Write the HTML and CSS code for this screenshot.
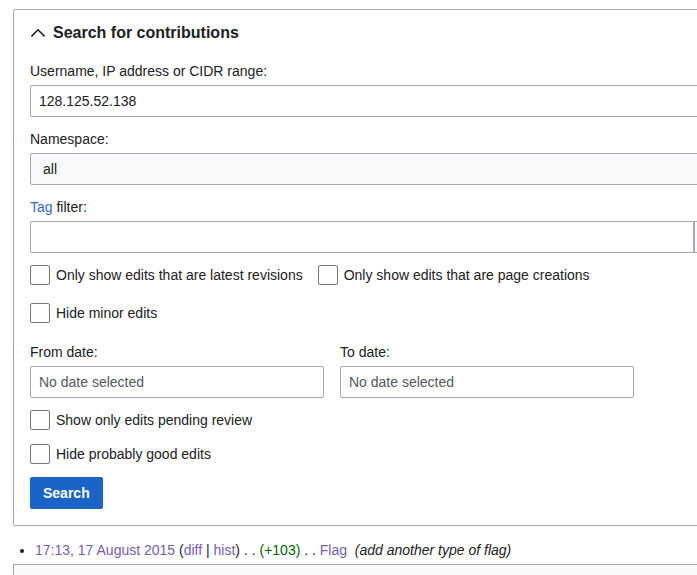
FILE: index.html
```html
<!DOCTYPE html>
<html lang="en">
<head>
<meta charset="utf-8">
<title>Contributions</title>
<link rel="stylesheet" href="styles.css">
</head>
<body>
<div class="page">
  <form class="panel">
    <div class="panel-header">
      <svg class="chevron" width="16" height="16" viewBox="0 0 20 20"><path d="M1.8 14.2 10 6l8.2 8.2" fill="none" stroke="#202122" stroke-width="2"/></svg>
      <span class="panel-title">Search for contributions</span>
    </div>

    <div class="field">
      <label class="label">Username, IP address or CIDR range:</label>
      <div class="input">128.125.52.138</div>
    </div>

    <div class="field">
      <label class="label">Namespace:</label>
      <div class="input select">all</div>
    </div>

    <div class="field">
      <label class="label"><a class="link" href="#">Tag</a> filter:</label>
      <div class="tag-row">
        <div class="input grow"></div>
        <div class="tag-button"></div>
      </div>
    </div>

    <div class="check-row first">
      <span class="check"><span class="box"></span>Only show edits that are latest revisions</span>
      <span class="check"><span class="box"></span>Only show edits that are page creations</span>
    </div>
    <div class="check-row gap18">
      <span class="check"><span class="box"></span>Hide minor edits</span>
    </div>

    <div class="dates">
      <div class="date-field">
        <label class="label">From date:</label>
        <div class="input placeholder">No date selected</div>
      </div>
      <div class="date-field">
        <label class="label">To date:</label>
        <div class="input placeholder">No date selected</div>
      </div>
    </div>

    <div class="check-row first">
      <span class="check"><span class="box"></span>Show only edits pending review</span>
    </div>
    <div class="check-row gap14">
      <span class="check"><span class="box"></span>Hide probably good edits</span>
    </div>

    <button type="button" class="search-btn">Search</button>
  </form>

  <ul class="results">
    <li><a class="visited" href="#">17:13, 17 August 2015</a> (<a class="visited" href="#">diff</a> | <a class="visited" href="#">hist</a>) . . <span class="pos">(+103)</span> . . <a class="visited" href="#">Flag</a> &nbsp;<i>(add another type of flag)</i></li>
  </ul>

  <div class="notice">This is the contributions page for an IP user, identified by the user's IP address. Many IP addresses change periodically.</div>
</div>
</body>
</html>
```

FILE: styles.css
```css
html, body {
  margin: 0;
  padding: 0;
  overflow: hidden;
  background: #ffffff;
}
body {
  font-family: "Liberation Sans", Arial, sans-serif;
  font-size: 14px;
  color: #202122;
  width: 697px;
  height: 575px;
}
.page {
  padding: 9px 0 0 13px;
  width: 760px;
}
.panel {
  border: 1px solid #a2a9b1;
  border-radius: 2px;
  padding: 0 16px 16px 16px;
  width: 700px;
}
.panel-header {
  display: flex;
  align-items: center;
  height: 43px;
  padding-top: 1px;
  gap: 7px;
}
.chevron {
  display: block;
}
.panel-title {
  font-weight: bold;
  font-size: 16px;
}
.field {
  margin-top: 7px;
}
.field + .field {
  margin-top: 12px;
}
.label {
  display: block;
  line-height: 20px;
  margin-bottom: 4px;
}
.link {
  color: #3366cc;
  text-decoration: none;
}
.input {
  box-sizing: border-box;
  height: 32px;
  border: 1px solid #a2a9b1;
  border-radius: 2px;
  background: #fff;
  padding: 0 8px;
  line-height: 30px;
  color: #202122;
}
.select {
  background: #f8f9fa;
  padding-left: 12px;
}
.tag-row {
  display: flex;
  width: 740px;
}
.grow {
  flex: 0 0 664px;
  border-radius: 2px 0 0 2px;
}
.tag-button {
  flex: 1;
  height: 32px;
  box-sizing: border-box;
  border: 1px solid #a2a9b1;
  background: #f8f9fa;
}
.check-row {
  display: flex;
  gap: 15px;
  height: 20px;
  align-items: center;
}
.check-row.first {
  margin-top: 12px;
}
.check-row.gap18 {
  margin-top: 18px;
}
.check-row.gap14 {
  margin-top: 14px;
}
.check {
  display: flex;
  align-items: center;
  gap: 6px;
  line-height: 20px;
}
.box {
  box-sizing: border-box;
  width: 20px;
  height: 20px;
  border: 1px solid #72777d;
  border-radius: 2px;
  background: #fff;
}
.dates {
  display: flex;
  gap: 16px;
  margin-top: 19px;
}
.date-field {
  width: 294px;
}
.placeholder {
  color: #54595d;
}
.search-btn {
  display: block;
  margin-top: 13px;
  height: 32px;
  padding: 0 12px;
  border: 1px solid #1a64c8;
  border-radius: 2px;
  background: #1a64c8;
  color: #fff;
  font-family: "Liberation Sans", Arial, sans-serif;
  font-size: 14px;
  font-weight: bold;
}
.results {
  margin: 0;
  padding: 14px 0 0 22px;
  list-style: disc;
  line-height: 20px;
}
.visited {
  color: #795cb2;
  text-decoration: none;
}
.pos {
  color: #006400;
}
.notice {
  margin-top: 4px;
  border: 1px solid #a2a9b1;
  background: #f8f9fa;
  padding: 9px 0 9px 68px;
  width: 700px;
  line-height: 20px;
}
```
